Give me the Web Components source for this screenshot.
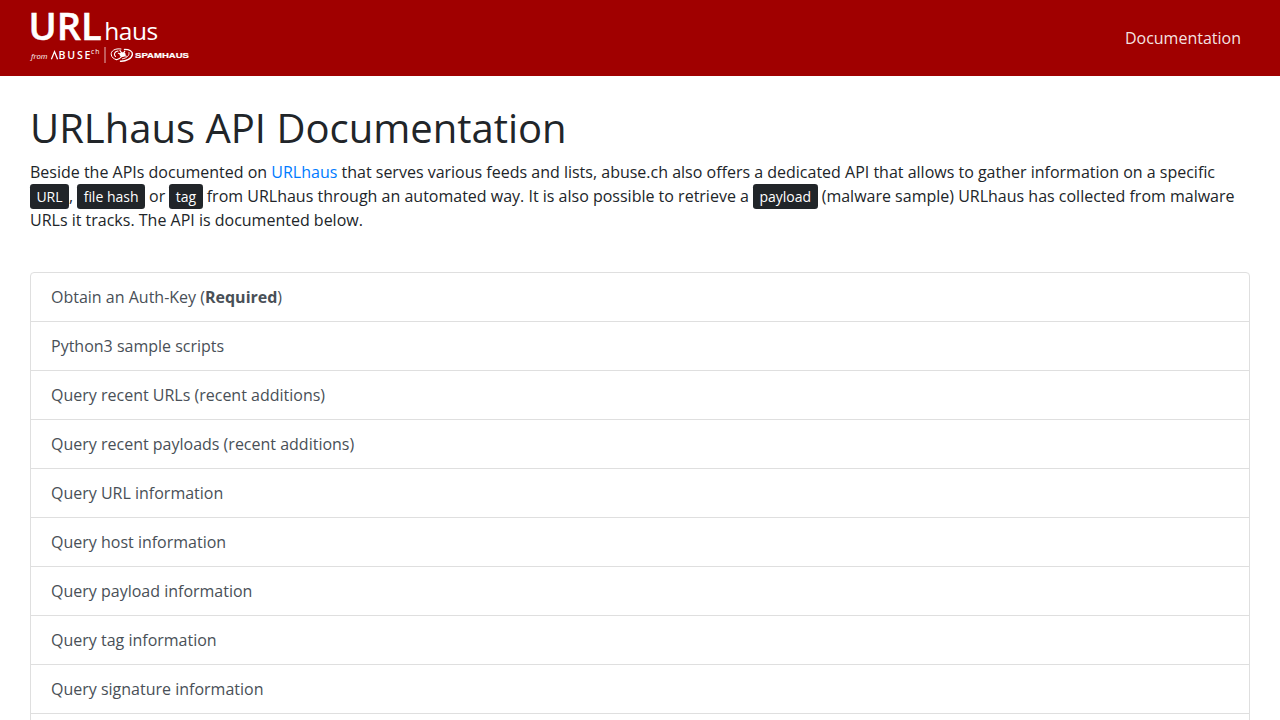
<!DOCTYPE html>
<html lang="en">
<head>
<meta charset="utf-8">
<title>URLhaus API Documentation</title>
<style>
    body {
        margin: 0;
        height: 720px;
        background-color: #fff;
        color: #212529;
        font-family: "Open Sans", sans-serif;
        font-size: 16px;
        line-height: 1.5;
        overflow: hidden;
    }
</style>
</head>
<body>
<nav-bar>
    <urlhaus-logo></urlhaus-logo>
    <nav-link slot="links">Documentation</nav-link>
</nav-bar>
<page-intro>
    <span slot="title">URLhaus API Documentation</span>
    Beside the APIs documented on <text-link>URLhaus</text-link> that serves various feeds and lists, abuse.ch also offers a dedicated API that allows to gather information on a specific <key-word>URL</key-word>, <key-word>file hash</key-word> or <key-word>tag</key-word> from URLhaus through an automated way. It is also possible to retrieve a <key-word>payload</key-word> (malware sample) URLhaus has collected from malware URLs it tracks. The API is documented below.
</page-intro>
<list-group>
    <list-item>Obtain an Auth-Key (<b>Required</b>)</list-item>
    <list-item>Python3 sample scripts</list-item>
    <list-item>Query recent URLs (recent additions)</list-item>
    <list-item>Query recent payloads (recent additions)</list-item>
    <list-item>Query URL information</list-item>
    <list-item>Query host information</list-item>
    <list-item>Query payload information</list-item>
    <list-item>Query tag information</list-item>
    <list-item>Query signature information</list-item>
    <list-item></list-item>
</list-group>

<script>
/**
 * Registers an element that only needs markup and styles
 */
function define(name, html) {
    const template = document.createElement("template");
    // whitespace around the slot would show up in inline elements
    template.innerHTML = html.replace(/>\s+</g, "><").trim();

    customElements.define(name, class extends HTMLElement {
        constructor() {
            super();
            const shadow = this.attachShadow({ mode: "open" });
            shadow.append(template.content.cloneNode(true));
        }
    });
}

// red bar on top of the page
define("nav-bar", `
    <style>
        :host {
            display: flex;
            align-items: center;
            justify-content: space-between;
            box-sizing: border-box;
            height: 76px;
            padding: 0 31px 0 30px;
            background-color: #a00000;
        }
    </style>
    <slot></slot>
    <slot name="links"></slot>
`);

define("nav-link", `
    <style>
        :host {
            display: block;
            padding: 8px;
            color: rgba(255, 255, 255, 0.9);
        }
    </style>
    <slot></slot>
`);

// wordmark with the abuse.ch and Spamhaus line below
define("urlhaus-logo", `
    <style>
        :host {
            display: block;
            width: 160px;
            height: 76px;
        }

        svg {
            display: block;
            overflow: visible;
            fill: #fff;
        }
    </style>
    <svg width="160" height="76" viewBox="30 0 160 76" font-family="Open Sans, sans-serif">
        <text x="28.4" y="40.2" font-size="37" font-weight="600" stroke="#fff" stroke-width=".5" textLength="73.2" lengthAdjust="spacingAndGlyphs">URL</text>
        <text x="104.2" y="40.2" font-size="24.5" textLength="54" lengthAdjust="spacing">haus</text>
        <text x="31" y="59" font-size="7.6" font-style="italic" textLength="16.5" lengthAdjust="spacingAndGlyphs">from</text>
        <path d="M51.4 59.2 L54.5 51.6 L57.6 59.2" fill="none" stroke="#fff" stroke-width="1.3"/>
        <text x="58.6" y="59.2" font-size="10.6" font-weight="600" textLength="31.8" lengthAdjust="spacing">BUSE</text>
        <text x="91" y="54.4" font-size="6.8" textLength="8.5">ch</text>
        <rect x="104.5" y="47" width="1" height="16" opacity=".7"/>
        <g fill="none" stroke="#fff" stroke-linecap="round">
            <path d="M121 49 C115 48 110.5 51 111.3 55 C111.8 57.5 114 59 116 59.5" stroke-width="1"/>
            <path d="M118 51 C114.5 51.5 113.3 54.5 115.5 56.5" stroke-width="1.1"/>
            <path d="M124.5 49.4 C129.5 49.4 132.8 51.4 132.4 54.4 C132 58.5 126 61.5 120.5 61.3" stroke-width="1.4"/>
            <path d="M129 52.6 C129.6 55.5 127 58 122.5 58.8" stroke-width="1"/>
            <path d="M116 59.5 C118 60 120 58.5 121.5 56.5 M118.4 53.3 L126.3 56.2 M124.8 51.2 L120.8 57.4 M120 50.5 L123 55" stroke-width="1.2"/>
        </g>
        <ellipse cx="122.6" cy="54.6" rx="3" ry="2.4"/>
        <text x="135" y="57.6" font-family="Liberation Sans, sans-serif" font-size="7.9" font-weight="700" textLength="54" lengthAdjust="spacingAndGlyphs" stroke="#fff" stroke-width=".2">SPAMHAUS</text>
    </svg>
`);

// heading and lead paragraph
define("page-intro", `
    <style>
        :host {
            display: block;
            padding: 28px 30px 40px;
        }

        h1 {
            margin: 0 0 8px;
            font-size: 40px;
            font-weight: 400;
            line-height: 1.2;
        }

        p {
            margin: 0;
        }
    </style>
    <h1><slot name="title"></slot></h1>
    <p><slot></slot></p>
`);

define("text-link", `
    <style>
        :host {
            color: #007bff;
        }
    </style>
    <slot></slot>
`);

define("key-word", `
    <style>
        :host {
            padding: 3.2px 6.4px;
            border-radius: 3.2px;
            background-color: #212529;
            color: #fff;
            font-size: 14px;
        }
    </style>
    <slot></slot>
`);

define("list-group", `
    <style>
        :host {
            display: flex;
            flex-direction: column;
            margin: 0 30px;
            border: 1px solid #dfdfdf;
            border-radius: 4px;
        }
    </style>
    <slot></slot>
`);

define("list-item", `
    <style>
        :host {
            display: block;
            padding: 12px 20px;
            border-bottom: 1px solid #dfdfdf;
            color: #495057;
        }

        :host(:last-child) {
            border-bottom: 0;
        }
    </style>
    <slot></slot>
`);
</script>
</body>
</html>
